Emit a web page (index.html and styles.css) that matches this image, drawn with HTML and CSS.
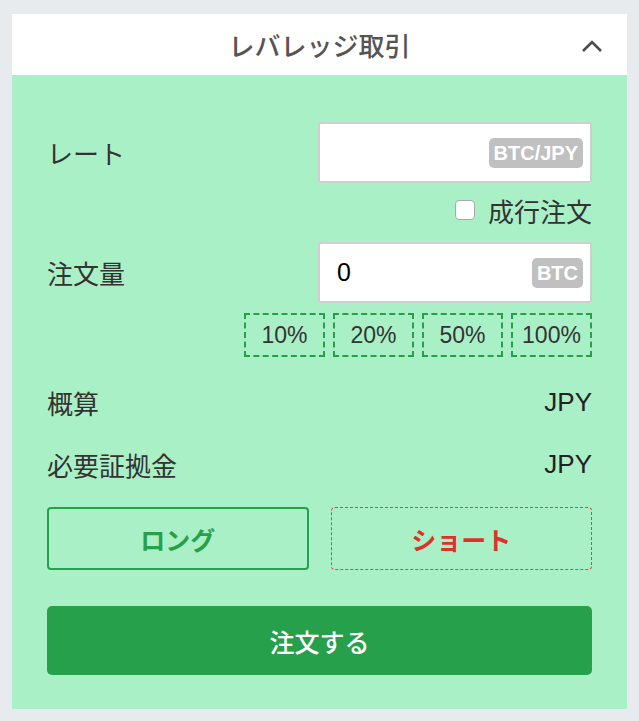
FILE: index.html
```html
<!DOCTYPE html>
<html lang="ja">
<head>
<meta charset="utf-8">
<title>レバレッジ取引</title>
<link rel="stylesheet" href="styles.css">
</head>
<body>
<div class="card">
  <div class="card-header">
    <span class="spacer"></span>
    <h1 class="title">レバレッジ取引</h1>
    <span class="toggle">
      <svg width="22" height="14" viewBox="0 0 22 14"><path d="M2 12 L11 3 L20 12" fill="none" stroke="#4a4a4a" stroke-width="2.6"/></svg>
    </span>
  </div>
  <div class="card-body">
    <div class="field-row">
      <span class="label">レート</span>
      <div class="input-box">
        <span class="value"></span>
        <span class="unit">BTC/JPY</span>
      </div>
    </div>
    <div class="check-row">
      <span class="checkbox"></span>
      <span class="check-label">成行注文</span>
    </div>
    <div class="field-row">
      <span class="label">注文量</span>
      <div class="input-box">
        <span class="value">0</span>
        <span class="unit">BTC</span>
      </div>
    </div>
    <div class="pct-row">
      <span class="pct">10%</span>
      <span class="pct">20%</span>
      <span class="pct">50%</span>
      <span class="pct">100%</span>
    </div>
    <div class="sum-row first">
      <span class="label">概算</span>
      <span class="sum-value">JPY</span>
    </div>
    <div class="sum-row">
      <span class="label">必要証拠金</span>
      <span class="sum-value">JPY</span>
    </div>
    <div class="side-row">
      <button class="side long">ロング</button>
      <button class="side short">ショート</button>
    </div>
    <button class="order">注文する</button>
  </div>
</div>
</body>
</html>
```
FILE: styles.css
```css
* { box-sizing: border-box; }
html, body { margin: 0; }
body {
  background: #e8ebee;
  padding: 14px 12px 12px;
  font-family: "Liberation Sans", "Noto Sans CJK JP", sans-serif;
  color: #333;
}
.card { width: 615px; }
.card-header {
  height: 61px;
  background: #fff;
  display: grid;
  grid-template-columns: 1fr auto 1fr;
  align-items: center;
}
.title {
  margin: 0;
  font-size: 26px;
  font-weight: 500;
  color: #555;
  letter-spacing: 0;
}
.toggle {
  justify-self: end;
  margin-right: 24px;
  display: flex;
  margin-top: 2px;
}
.card-body {
  background: #aaf0c6;
  padding: 47px 35px 34px;
  display: flex;
  flex-direction: column;
}
.field-row {
  display: flex;
  justify-content: space-between;
  align-items: center;
}
.label {
  font-size: 26px;
  color: #333;
}
.input-box {
  width: 274px;
  height: 61px;
  background: #fff;
  border: 2px solid #cfcfcf;
  border-radius: 3px;
  display: flex;
  align-items: center;
  justify-content: space-between;
  padding: 0 7px 0 17px;
}
.value {
  font-size: 25px;
  color: #000;
}
.unit {
  background: #c0c0c0;
  color: #fff;
  font-weight: 700;
  font-size: 20px;
  border-radius: 5px;
  height: 30px;
  line-height: 30px;
  padding: 0 5px;
}
.check-row {
  display: flex;
  justify-content: flex-end;
  align-items: center;
  height: 30px;
  margin: 12px 0 17px;
  gap: 13px;
}
.checkbox {
  width: 20px;
  height: 20px;
  background: #fff;
  border: 1px solid #a9a9a9;
  border-radius: 4px;
}
.check-label {
  font-size: 26px;
  color: #333;
}
.pct-row {
  display: flex;
  justify-content: flex-end;
  gap: 8px;
  margin-top: 10px;
}
.pct {
  width: 81px;
  height: 44px;
  border: 2px dashed #27a04c;
  display: flex;
  align-items: center;
  justify-content: center;
  font-size: 23px;
  color: #333;
}
.sum-row {
  display: flex;
  justify-content: space-between;
  align-items: center;
  height: 40px;
  margin-top: 22px;
}
.sum-row.first { margin-top: 25px; }
.sum-value {
  font-size: 26px;
  color: #222;
}
.side-row {
  display: grid;
  grid-template-columns: 1fr 1fr;
  gap: 22px;
  margin-top: 23px;
}
.side {
  height: 63px;
  background: transparent;
  font-family: "Liberation Sans", "Noto Sans CJK JP", sans-serif;
  font-size: 25px;
  font-weight: 700;
  border-radius: 4px;
  cursor: pointer;
}
.long {
  border: 2px solid #27a04c;
  color: #27a04c;
}
.short {
  border: 1px dashed #e0443f;
  color: #e0302c;
}
.order {
  margin-top: 36px;
  height: 69px;
  background: #27a04c;
  color: #fff;
  border: none;
  border-radius: 5px;
  font-family: "Liberation Sans", "Noto Sans CJK JP", sans-serif;
  font-size: 25px;
  font-weight: 500;
  cursor: pointer;
}
```
